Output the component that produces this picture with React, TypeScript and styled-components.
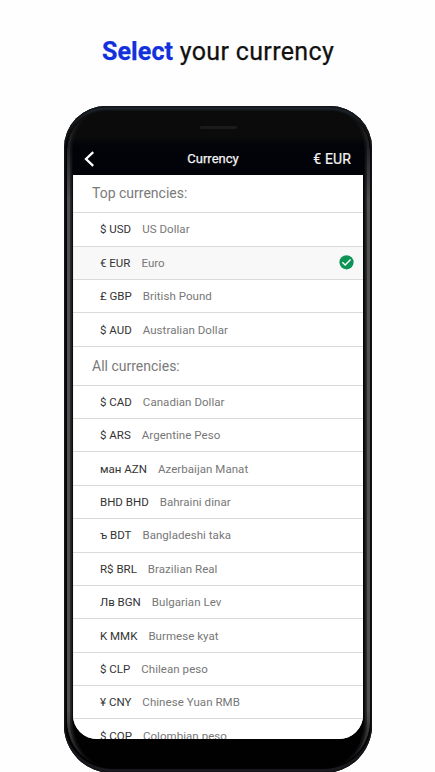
import React from "react";
import styled, { createGlobalStyle } from "styled-components";

const GlobalStyle = createGlobalStyle`
  * { box-sizing: border-box; }
  body { margin: 0; background: #fefefe; overflow: hidden; }
`;

const Page = styled.main`
  width: 435px;
  height: 772px;
  overflow: hidden;
  display: flex;
  flex-direction: column;
  font-family: Roboto, "Noto Sans", sans-serif;
`;

const Title = styled.h1`
  flex: none;
  height: 106px;
  margin: 0;
  padding: 36px 0 0 102px;
  font-size: 25px;
  line-height: 32px;
  font-weight: 400;
  letter-spacing: 0.35px;
  color: #111;
  -webkit-text-stroke: 0.25px currentColor;
  white-space: nowrap;
`;

const Accent = styled.strong`
  font-weight: 700;
  letter-spacing: 0.1px;
  color: #1230dc;
`;

const Phone = styled.section`
  position: relative;
  flex: none;
  width: 308px;
  height: 667px;
  margin-left: 64px;
  padding: 5px 9px 0;
  border-radius: 42px 42px 48px 48px;
  background: linear-gradient(#0b0b0b 30px, #010308 40px, #010308 72px, #030303 90%, #000);
  box-shadow: inset 0 0 0 1.5px #141418, inset 0 5px 2px -1px #1e252d,
    inset 0 -4px 1px #1b1b22;
`;

/* Metallic reflection running along both sides of the case. */
const Rim = styled.div`
  position: absolute;
  inset: 4px 2.5px 5px;
  border: solid #505050;
  border-width: 0 3px;
  border-radius: 40px 40px 46px 46px;
  box-shadow: inset 2px 0 2px #2c2c2c, inset -2px 0 2px #2c2c2c;
  mask-image: linear-gradient(transparent, #0005 30px, #000 90px, #000 600px, #0006 640px, transparent);
  pointer-events: none;
`;

const Speaker = styled.div`
  width: 37px;
  height: 3px;
  margin: 15px auto;
  border-radius: 2px;
  background: #1b1b1d;
`;

const AppBar = styled.header`
  display: grid;
  grid-template-columns: 1fr auto 1fr;
  align-items: center;
  height: 31px;
  padding: 0 12px 2px 10px;
  color: #f4f4f4;
`;

const BarTitle = styled.span`
  margin-left: -8px;
  font-size: 13px;
  line-height: 18px;
  -webkit-text-stroke: 0.25px currentColor;
`;

const Selected = styled.span`
  justify-self: end;
  font-size: 14px;
  line-height: 18px;
  letter-spacing: 0.15px;
  -webkit-text-stroke: 0.2px currentColor;
`;

const Screen = styled.div`
  height: 564px;
  overflow: hidden;
  background: #fff;
  border-radius: 0 0 24px 24px;
`;

const GroupTitle = styled.h2<{ $height: number }>`
  height: ${(p) => p.$height}px;
  margin: 0;
  padding-left: 19px;
  border-bottom: 1px solid #dadada;
  font-size: 14px;
  font-weight: 400;
  line-height: ${(p) => p.$height - 1}px;
  color: #7a7a7a;
`;

const Row = styled.div<{ $active?: boolean }>`
  display: flex;
  align-items: center;
  gap: 11px;
  height: 33.38px;
  padding: 0 9px 0 27px;
  border-bottom: 1px solid #dadada;
  background: ${(p) => (p.$active ? "#f8f8f8" : "#fff")};
  font-size: 11.5px;
  white-space: nowrap;
`;

const Code = styled.span`
  color: #333;
`;

const Name = styled.span`
  flex: 1;
  color: #777;
  letter-spacing: 0.05px;
`;

type Currency = [code: string, name: string];

const top: Currency[] = [
  ["$ USD", "US Dollar"],
  ["€ EUR", "Euro"],
  ["£ GBP", "British Pound"],
  ["$ AUD", "Australian Dollar"],
];

const all: Currency[] = [
  ["$ CAD", "Canadian Dollar"],
  ["$ ARS", "Argentine Peso"],
  ["ман AZN", "Azerbaijan Manat"],
  ["BHD BHD", "Bahraini dinar"],
  ["ъ BDT", "Bangladeshi taka"],
  ["R$ BRL", "Brazilian Real"],
  ["Лв BGN", "Bulgarian Lev"],
  ["K MMK", "Burmese kyat"],
  ["$ CLP", "Chilean peso"],
  ["¥ CNY", "Chinese Yuan RMB"],
  ["$ COP", "Colombian peso"],
];

const BackIcon = () => (
  <svg width="12" height="16" viewBox="0 0 12 16" fill="none">
    <path d="M10.2 1.2 3 8l7.2 6.8" stroke="#fff" strokeWidth="2.3" />
  </svg>
);

const CheckIcon = () => (
  <svg width="15" height="15" viewBox="0 0 15 15" fill="none">
    <circle cx="7.5" cy="7.3" r="7.1" fill="#0d9455" />
    <path d="m3.4 7.3 2.8 2.8 5.4-5.6" stroke="#fff" strokeWidth="1.4" />
  </svg>
);

const CurrencyRow = ({ item: [code, name], active }: { item: Currency; active?: boolean }) => (
  <Row $active={active}>
    <Code>{code}</Code>
    <Name>{name}</Name>
    {active && <CheckIcon />}
  </Row>
);

export default function App() {
  return (
    <Page>
      <GlobalStyle />
      <Title>
        <Accent>Select</Accent> your currency
      </Title>
      <Phone>
        <Rim />
        <Speaker />
        <AppBar>
          <BackIcon />
          <BarTitle>Currency</BarTitle>
          <Selected>€ EUR</Selected>
        </AppBar>
        <Screen>
          <GroupTitle $height={38.2}>Top currencies:</GroupTitle>
          {top.map((c) => (
            <CurrencyRow key={c[0]} item={c} active={c[0] === "€ EUR"} />
          ))}
          <GroupTitle $height={39}>All currencies:</GroupTitle>
          {all.map((c) => (
            <CurrencyRow key={c[0]} item={c} />
          ))}
        </Screen>
      </Phone>
    </Page>
  );
}
